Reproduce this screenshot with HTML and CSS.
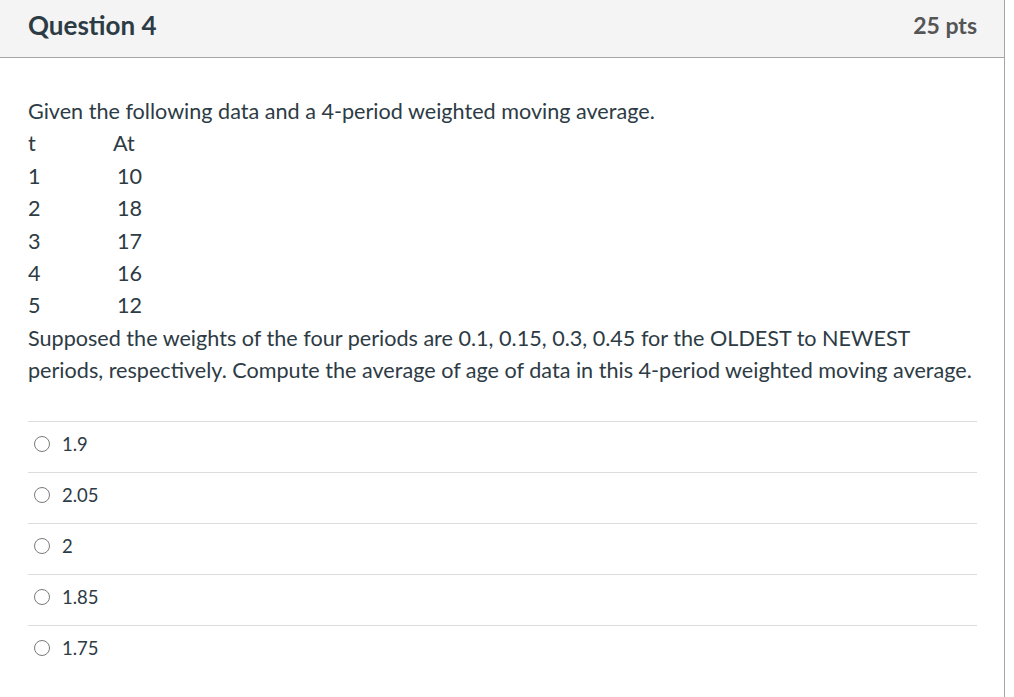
FILE: index.html
```html
<!DOCTYPE html>
<html>
<head>
<meta charset="utf-8">
<link rel="stylesheet" href="styles.css">
</head>
<body>
<div class="question">
  <div class="q-header">
    <h2 class="q-title">Question 4</h2>
    <span class="q-points">25 pts</span>
  </div>
  <div class="q-body">
    <div class="q-text">
      <p>Given the following data and a 4-period weighted moving average.</p>
      <div class="data">
        <span class="c1">t</span><span class="c2 head">At</span>
        <span class="c1">1</span><span class="c2">10</span>
        <span class="c1">2</span><span class="c2">18</span>
        <span class="c1">3</span><span class="c2">17</span>
        <span class="c1">4</span><span class="c2">16</span>
        <span class="c1">5</span><span class="c2">12</span>
      </div>
      <p>Supposed the weights of the four periods are 0.1, 0.15, 0.3, 0.45 for the OLDEST to NEWEST periods, respectively. Compute the average of age of data in this 4-period weighted moving average.</p>
    </div>
    <div class="answers">
      <label class="answer"><span class="radio"></span><span class="a-text">1.9</span></label>
      <label class="answer"><span class="radio"></span><span class="a-text">2.05</span></label>
      <label class="answer"><span class="radio"></span><span class="a-text">2</span></label>
      <label class="answer"><span class="radio"></span><span class="a-text">1.85</span></label>
      <label class="answer"><span class="radio"></span><span class="a-text">1.75</span></label>
    </div>
  </div>
</div>
</body>
</html>
```
FILE: styles.css
```css
html, body {
  margin: 0;
  padding: 0;
  background: #fff;
}
body {
  font-family: Lato, "Liberation Sans", sans-serif;
  color: #2d3b45;
}
.question {
  width: 1005px;
  min-height: 697px;
  border-right: 1px solid #a5a5a5;
  box-sizing: border-box;
}
.q-header {
  height: 58px;
  box-sizing: border-box;
  background: #f4f4f4;
  border-bottom: 1px solid #a5a5a5;
  display: flex;
  justify-content: space-between;
  align-items: center;
  padding: 0 27px 7px 28px;
}
.q-title {
  margin: 0;
  font-size: 26px;
  font-weight: 700;
  color: #2d3b45;
}
.q-points {
  font-size: 23px;
  font-weight: 700;
  color: #555;
}
.q-body {
  padding: 37px 27px 0 28px;
}
.q-text {
  font-size: 21.6px;
  line-height: 32.4px;
}
.q-text p {
  margin: 0;
}
.data {
  display: grid;
  grid-template-columns: 85px auto;
}
.data .c2 {
  padding-left: 4px;
}
.data .c2.head {
  padding-left: 0;
}
.answers {
  margin-top: 34px;
}
.answer {
  display: flex;
  align-items: center;
  height: 51px;
  border-top: 1px solid #dcdcdc;
  box-sizing: border-box;
  padding-left: 6px;
  padding-bottom: 6px;
  font-size: 18.5px;
}
.radio {
  width: 16px;
  height: 16px;
  border: 1.5px solid #7a7a7a;
  border-radius: 50%;
  box-sizing: border-box;
  margin-right: 12px;
}
```
